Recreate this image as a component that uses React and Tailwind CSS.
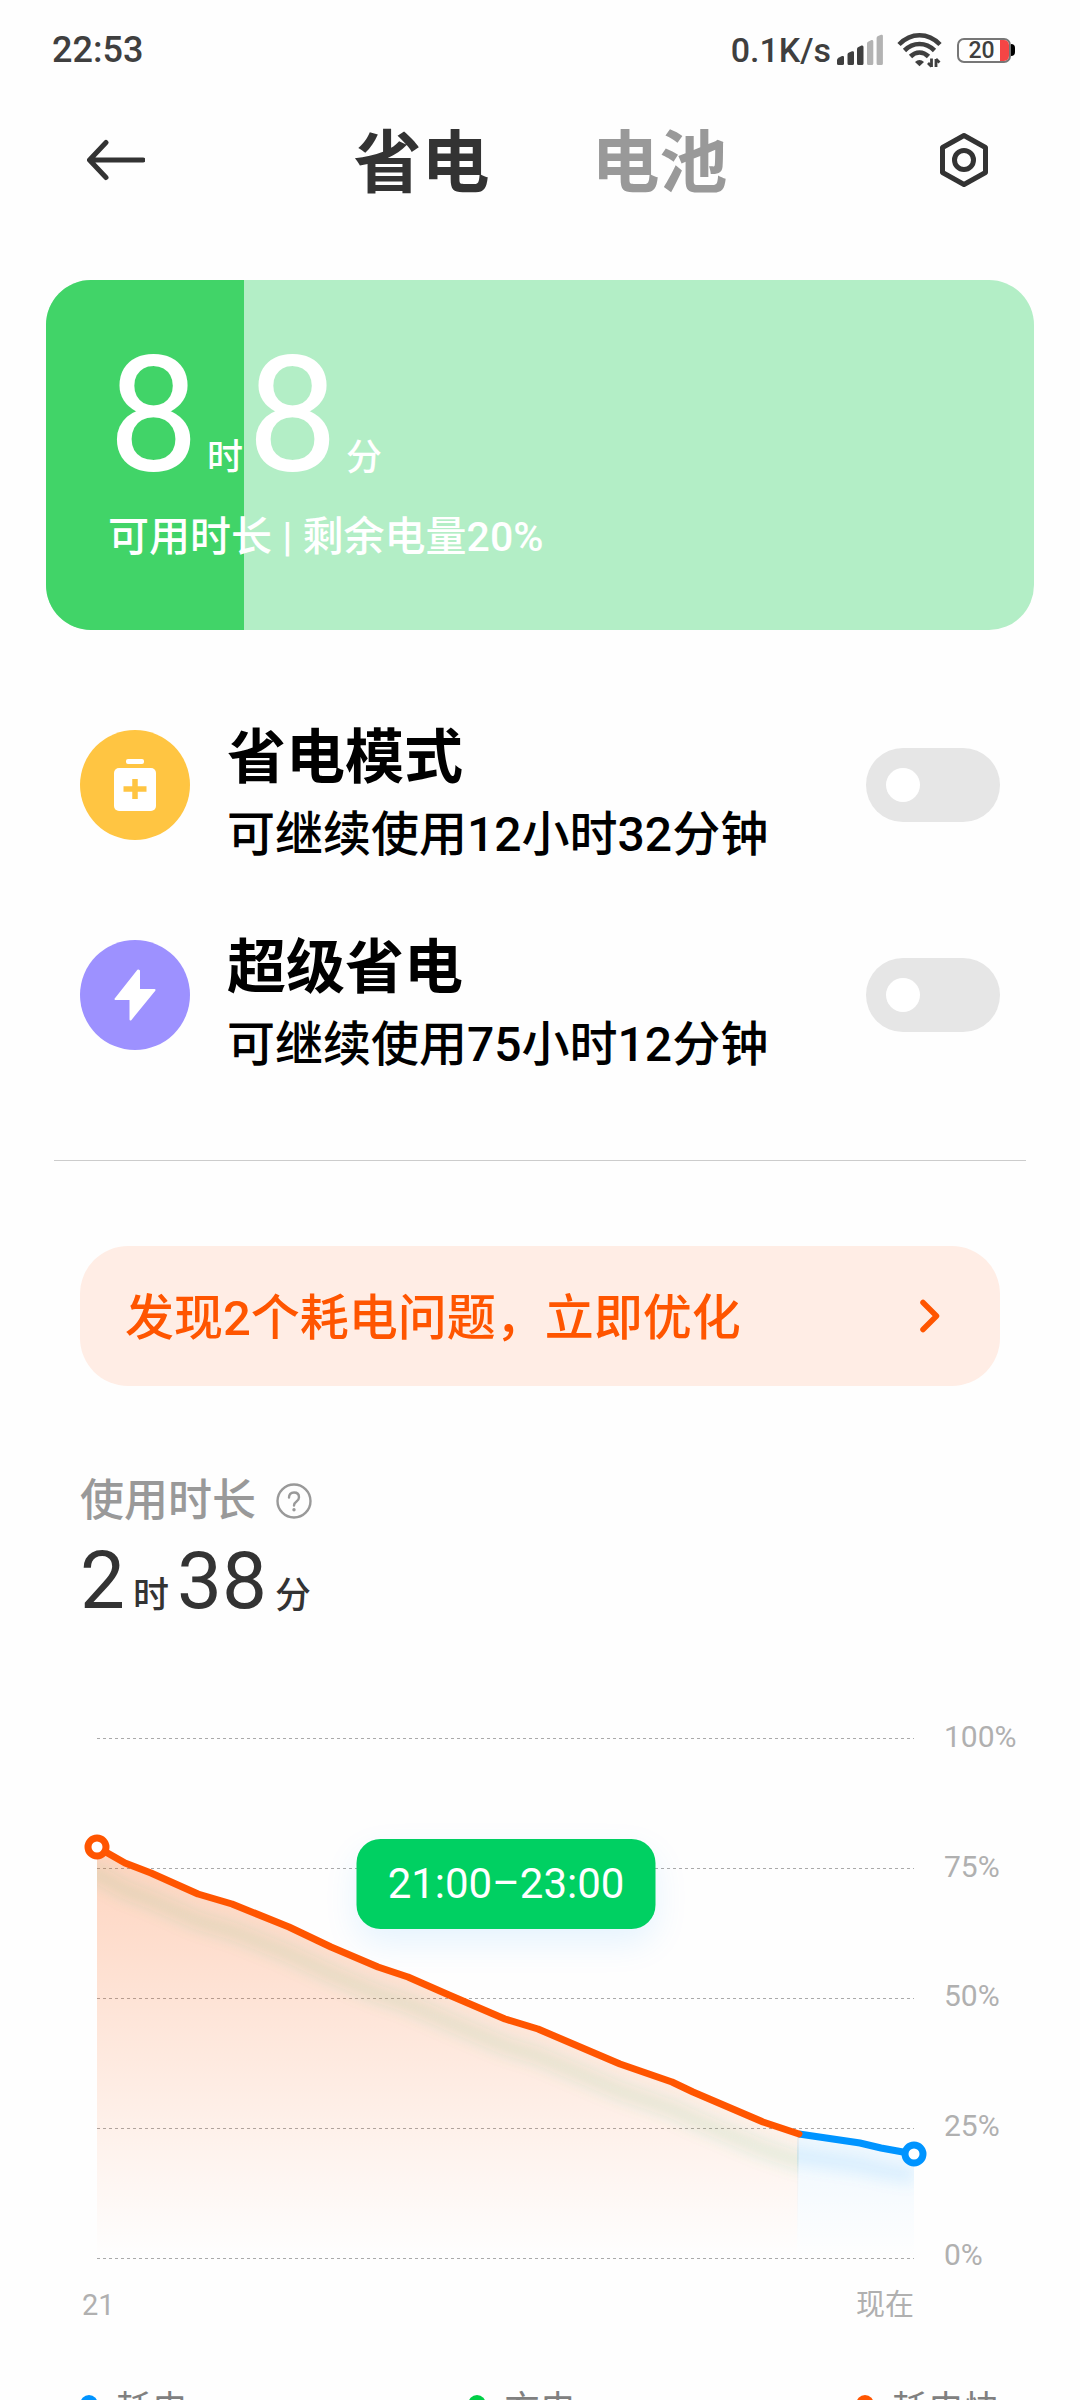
import React, { useState } from 'react';

const GRID_LINES = [21, 151, 281, 411, 541];
const PERCENTS = ['100%', '75%', '50%', '25%', '0%'];

const FAST_LINE =
  '17,130 45,146 71,156 118,177 152,187 209,210 251,230 298,250 328,260 369,278 425,302 458,312 540,347 592,365 613,375 683,405 719,417';
const SLOW_LINE = '719,417 780,426 801,431 834,437';

const LEGEND = [
  { label: '耗电', dot: 'bg-[#0094ff]' },
  { label: '充电', dot: 'bg-[#00cf46]' },
  { label: '耗电快', dot: 'bg-[#ff5500]' },
];

function SignalIcon() {
  return (
    <svg width="46" height="32" viewBox="0 0 46 32" fill="#3f3f3f">
      <path d="M0 26q0-1.500 2-2.500l3-1.500q2-.5 2 1v6.500q0 1.500-1.500 1.500h-4Q0 31 0 29.500z" />
      <path d="M10.500 20.500q0-1.500 1.500-2l3-1.200q2-.5 2 1.200v11q0 1.500-1.500 1.500H12q-1.500 0-1.500-1.500z" />
      <path d="M20 15q0-1.500 1.500-2l3-1.400q2-.5 2 1.400v16.500q0 1.500-1.500 1.500h-3.500Q20 31 20 29.500z" />
      <path d="M30 9.500q0-1.500 1.500-2l3-1.400q1.800-.5 1.800 1.400v22q0 1.500-1.500 1.500h-3.300Q30 31 30 29.500z" fill="#b3b3b3" />
      <path d="M39.600 4q0-1.500 1.500-2l3-1.200q1.800-.5 1.800 1.200v27.500q0 1.500-1.500 1.500h-3.300q-1.500 0-1.500-1.500z" fill="#b3b3b3" />
    </svg>
  );
}

function WifiIcon() {
  return (
    <svg width="46" height="36" viewBox="0 0 46 36" fill="none" stroke="#3f3f3f" strokeWidth="4.600">
      <path d="M2 12.500Q11 3.300 22.500 3.300T43 12.500" />
      <path d="M7.500 18.500Q14 12 22.500 12t15 6.500" />
      <path d="M13.500 24.500Q17.500 20.500 22.500 20.500t9 4" />
      <path d="M22.500 28q2.500 0 4.500 2l-4.500 4.200L18 30q2-2 4.500-2z" fill="#3f3f3f" stroke="none" />
      <path d="M34.500 26.500v8.500M34.500 34.500L31 31M39 35v-8M39 27l3.500 3.500" strokeWidth="2.800" />
    </svg>
  );
}

function StatusBar() {
  return (
    <div className="flex h-[100px] items-center justify-between pl-[52px] pr-[65px] font-medium text-[#3f3f3f]">
      <span className="text-[36px]">22:53</span>
      <div className="flex items-center">
        <span className="mr-[6px] text-[34px]">0.1K/s</span>
        <SignalIcon />
        <span className="mx-[14px]"><WifiIcon /></span>
        <div className="flex h-[25px] w-[54px] items-stretch overflow-hidden rounded-[7px] border-2 border-[#777]">
          <span className="flex-1 pl-1 text-center text-[23px] leading-[22px]">20</span>
          <span className="w-[9px] bg-[#f54545]" />
        </div>
        <span className="h-3 w-1 rounded-r-full bg-black" />
      </div>
    </div>
  );
}

function Header({ tab, setTab }) {
  return (
    <header className="flex h-[120px] items-center justify-between pl-[87px] pr-[88px]">
      <button aria-label="返回">
        <svg width="58" height="42" viewBox="0 0 58 42" fill="none" stroke="#333" strokeWidth="5" strokeLinecap="round" strokeLinejoin="round">
          <path d="M56 21H3M19 3.500L2.500 21 19 38.500" />
        </svg>
      </button>
      <nav className="flex gap-[102px] pt-2 text-[68px] font-bold leading-[80px]">
        <button onClick={() => setTab('save')} className={tab === 'save' ? 'text-[#333]' : 'text-[#999]'}>省电</button>
        <button onClick={() => setTab('battery')} className={tab === 'battery' ? 'text-[#333]' : 'text-[#999]'}>电池</button>
      </nav>
      <button aria-label="设置">
        <svg width="56" height="56" viewBox="0 0 56 56" fill="none" stroke="#333" strokeWidth="5" strokeLinejoin="round">
          <path d="M28 3.500L49.500 15.500v25L28 52.500 6.500 40.500v-25z" />
          <circle cx="28" cy="28" r="9.500" />
        </svg>
      </button>
    </header>
  );
}

function BatteryCard({ percent }) {
  return (
    <section className="relative mx-[46px] mt-[60px] h-[350px] overflow-hidden rounded-[45px] bg-[#b3eec6] text-white">
      <div className="absolute inset-y-0 left-0 bg-[#41d468]" style={{ width: `${percent}%` }} />
      <div className="relative px-[62px] pt-[60px]">
        <p className="flex items-baseline text-[162px] leading-[150px]">
          8<span className="ml-2 mr-1 text-[36px] font-medium leading-9">时</span>
          8<span className="ml-2 text-[36px] font-medium leading-9">分</span>
        </p>
        <p className="mt-[22px] text-[41px] font-medium leading-[50px]">可用时长 | 剩余电量{percent}%</p>
      </div>
    </section>
  );
}

function ModeRow({ id, title, detail, color, icon }) {
  const [on, setOn] = useState(false);
  return (
    <div className="flex h-[142px] items-start">
      <span className={`mt-[10px] flex h-[110px] w-[110px] items-center justify-center rounded-full ${color}`}>{icon}</span>
      <label htmlFor={id} className="ml-[37px] flex-1 pt-[3px] text-black">
        <span className="block text-[59px] font-bold leading-[70px]">{title}</span>
        <span className="mt-3 block text-[48px] font-medium leading-[60px]">{detail}</span>
      </label>
      <input
        id={id}
        type="checkbox"
        role="switch"
        checked={on}
        onChange={() => setOn(!on)}
        className="mt-7 flex h-[74px] w-[134px] appearance-none items-center rounded-full bg-[#e6e6e6] px-5 before:h-[34px] before:w-[34px] before:rounded-full before:bg-white checked:justify-end checked:bg-[#0094ff]"
      />
    </div>
  );
}

function BatteryPlusIcon() {
  return (
    <svg width="42" height="52" viewBox="0 0 42 52">
      <rect x="12" y="0" width="18" height="5" rx="2" fill="#fff" />
      <rect x="0" y="9" width="42" height="43" rx="5" fill="#fff" />
      <path d="M21 20v20M9.500 30h23" stroke="#ffc542" strokeWidth="5.500" />
    </svg>
  );
}

function BoltIcon() {
  return (
    <svg width="44" height="54" viewBox="0 0 44 54">
      <path d="M25 2.500L2.500 31H17.500V51.500L41.500 22H26V3z" fill="#fff" stroke="#fff" strokeWidth="2" strokeLinejoin="round" />
    </svg>
  );
}

function BatteryChart() {
  return (
    <div className="mt-24 flex pl-20 pr-11">
      <div className="relative min-w-0 flex-1">
        <svg className="h-auto w-full" viewBox="0 0 852 556" fill="none">
          <defs>
            <linearGradient id="fast" gradientUnits="userSpaceOnUse" x1="0" y1="130" x2="0" y2="541">
              <stop offset="0" stopColor="#ff5500" stopOpacity="0.25" />
              <stop offset="1" stopColor="#ff5500" stopOpacity="0" />
            </linearGradient>
            <linearGradient id="slow" gradientUnits="userSpaceOnUse" x1="0" y1="417" x2="0" y2="541">
              <stop offset="0" stopColor="#0094ff" stopOpacity="0.06" />
              <stop offset="1" stopColor="#0094ff" stopOpacity="0" />
            </linearGradient>
            <filter id="soft" filterUnits="userSpaceOnUse" x="-40" y="100" width="920" height="456">
              <feGaussianBlur stdDeviation="7" />
            </filter>
            <clipPath id="fastArea"><polygon points={`${FAST_LINE} 717,541 17,541`} /></clipPath>
            <clipPath id="slowArea"><polygon points={`${SLOW_LINE} 834,541 717,541 717,417`} /></clipPath>
          </defs>
          {GRID_LINES.map((y) => (
            <path key={y} d={`M17 ${y}.5H834`} stroke="#aaa" strokeDasharray="3 3" />
          ))}
          <polygon points={`${FAST_LINE} 717,541 17,541`} fill="url(#fast)" />
          <polygon points={`${SLOW_LINE} 834,541 717,541 717,417`} fill="url(#slow)" />
          <g clipPath="url(#fastArea)">
            <polyline points={`-10,130 ${FAST_LINE} 745,421`} transform="translate(0 27)" stroke="#2fae5c" strokeOpacity="0.11" strokeWidth="18" filter="url(#soft)" />
          </g>
          <g clipPath="url(#slowArea)">
            <polyline points={`690,410 ${SLOW_LINE}`} transform="translate(0 22)" stroke="#0094ff" strokeOpacity="0.1" strokeWidth="18" filter="url(#soft)" />
          </g>
          <polyline points={SLOW_LINE} stroke="#0094ff" strokeWidth="7" />
          <polyline points={FAST_LINE} stroke="#ff5500" strokeWidth="7" strokeLinejoin="round" strokeLinecap="round" />
          <circle cx="17" cy="130" r="9" fill="#fff" stroke="#ff5500" strokeWidth="7" />
          <circle cx="834" cy="437" r="9" fill="#fff" stroke="#0094ff" strokeWidth="7" />
        </svg>
        <div className="absolute left-1/2 top-[122px] w-[299px] -translate-x-1/2 rounded-[24px] bg-[#00d062] text-center text-[42px] leading-[90px] text-white shadow-[0_14px_34px_rgba(0,148,255,0.1)]">
          21:00–23:00
        </div>
      </div>
      <ul className="ml-3 flex w-[92px] flex-col justify-between pt-[2px] text-[30px] leading-9 text-[#b0b0b0]">
        {PERCENTS.map((p) => (
          <li key={p}>{p}</li>
        ))}
      </ul>
    </div>
  );
}

export default function App() {
  const [tab, setTab] = useState('save');

  return (
    <div className="h-screen overflow-y-auto bg-[#fefefe] pb-12 font-[Roboto,'Noto_Sans_CJK_SC',sans-serif] [scrollbar-width:none]" lang="zh-CN">
      <StatusBar />
      <Header tab={tab} setTab={setTab} />
      <BatteryCard percent={20} />

      <section className="mx-20 mt-[90px] flex flex-col gap-[68px]">
        <ModeRow id="saver" title="省电模式" detail="可继续使用12小时32分钟" color="bg-[#ffc542]" icon={<BatteryPlusIcon />} />
        <ModeRow id="ultra" title="超级省电" detail="可继续使用75小时12分钟" color="bg-[#9d91ff]" icon={<BoltIcon />} />
      </section>

      <hr className="mx-[54px] mt-[88px] border-[#ccc]" />

      <button className="mx-20 mt-[85px] flex h-[140px] w-[calc(100%-160px)] items-center justify-between rounded-[48px] bg-[#ffede5] pl-[45px] pr-[58px] text-[49px] font-medium text-[#ff5500]">
        <span className="pt-[6px]">发现2个耗电问题，立即优化</span>
        <svg width="24" height="36" viewBox="0 0 24 36" fill="none" stroke="#ff5500" strokeWidth="5.500" strokeLinecap="round" strokeLinejoin="round">
          <path d="M5 4.500L18.500 18 5 31.500" />
        </svg>
      </button>

      <section className="mt-[83px]">
        <div className="flex items-center px-20 text-[#999]">
          <h2 className="text-[44px] font-medium leading-[64px]">使用时长</h2>
          <button className="ml-5" aria-label="说明">
            <svg width="36" height="36" viewBox="0 0 36 36" fill="none" stroke="#999" strokeWidth="2.400">
              <circle cx="18" cy="18" r="16.500" />
              <path d="M13 14.500q0-5 5-5t5 4.700q0 2.500-2.500 4.200T18 22.500" strokeLinecap="round" />
              <circle cx="18" cy="26.800" r="1.700" fill="#999" stroke="none" />
            </svg>
          </button>
        </div>
        <p className="mt-2 flex items-baseline px-20 text-[80px] leading-[80px] text-[#333]">
          2<span className="ml-2 mr-2 text-[36px] font-medium leading-9">时</span>
          38<span className="ml-2 text-[36px] font-medium leading-9">分</span>
        </p>
        <BatteryChart />
        <div className="mt-3 flex justify-between pl-[82px] pr-[166px] text-[29px] leading-10 text-[#b0b0b0]">
          <span>21</span>
          <span>现在</span>
        </div>
        <ul className="mt-[55px] flex justify-between px-20 text-[36px] leading-[50px] text-[#808080]">
          {LEGEND.map((item) => (
            <li key={item.label} className="flex items-start gap-[18px]">
              <span className={`mt-[15px] h-[18px] w-[18px] rounded-full ${item.dot}`} />
              <span className="pt-[5px]">{item.label}</span>
            </li>
          ))}
        </ul>
      </section>
    </div>
  );
}
